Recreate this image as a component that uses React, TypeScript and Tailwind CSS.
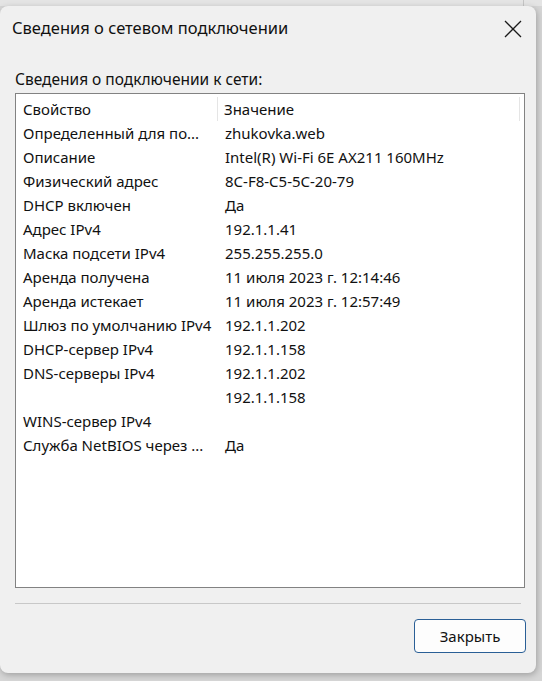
import React from "react";

const rows: [string, string][] = [
  ["Определенный для по...", "zhukovka.web"],
  ["Описание", "Intel(R) Wi-Fi 6E AX211 160MHz"],
  ["Физический адрес", "8C-F8-C5-5C-20-79"],
  ["DHCP включен", "Да"],
  ["Адрес IPv4", "192.1.1.41"],
  ["Маска подсети IPv4", "255.255.255.0"],
  ["Аренда получена", "11 июля 2023 г. 12:14:46"],
  ["Аренда истекает", "11 июля 2023 г. 12:57:49"],
  ["Шлюз по умолчанию IPv4", "192.1.1.202"],
  ["DHCP-сервер IPv4", "192.1.1.158"],
  ["DNS-серверы IPv4", "192.1.1.202"],
  ["", "192.1.1.158"],
  ["WINS-сервер IPv4", ""],
  ["Служба NetBIOS через ...", "Да"],
];

export default function App() {
  return (
    <div
      className="w-[542px] h-[681px] bg-[#d6d6d6] overflow-hidden flex flex-col"
      style={{ fontFamily: '"Noto Sans", "Segoe UI", sans-serif' }}
    >
      <div className="h-[6px] flex shrink-0 bg-[#e4e4e4]">
        <div className="w-[524px] border-r border-[#c4c4c4]" />
      </div>
      <div className="w-[536px] h-[667px] bg-[#f0f0f0] rounded-lg shadow-[1px_2px_6px_rgba(0,0,0,0.25)] flex flex-col text-[#111]">
        <div className="h-[44px] flex items-center justify-between pl-[12px] pr-[14px]">
          <span className="text-[16.5px] leading-none">Сведения о сетевом подключении</span>
          <svg width="18" height="18" viewBox="0 0 18 18" className="mt-[1px]">
            <path d="M1 1 L17 17 M17 1 L1 17" stroke="#1a1a1a" strokeWidth="1.3" fill="none" />
          </svg>
        </div>
        <div className="pl-[15px] pt-[19px] text-[15.5px] leading-[20px]">Сведения о подключении к сети:</div>
        <div className="ml-[15px] mt-[4px] w-[510px] h-[495px] bg-white border border-[#828282] pt-[3px] text-[15px]">
          <div className="flex h-[24px] items-center">
            <div className="w-[202px] pl-[7px] border-r border-[#e5e5e5] h-full flex items-center">Свойство</div>
            <div className="w-[302px] pl-[6px] border-r border-[#e5e5e5] h-full flex items-center">Значение</div>
          </div>
          {rows.map(([k, v], i) => (
            <div key={i} className="flex h-[24px] items-center">
              <div className="w-[202px] pl-[7px] whitespace-nowrap overflow-hidden">{k}</div>
              <div className="pl-[7px] whitespace-nowrap">{v}</div>
            </div>
          ))}
        </div>
        <div className="ml-[15px] mt-[15px] w-[506px] h-px bg-[#c8c8c8]" />
        <div className="flex justify-end pr-[10px] mt-[15px]">
          <button className="w-[112px] h-[34px] rounded-[4px] border border-[#2a5f96] bg-[#fdfdfd] text-[15px] text-[#111]">
            Закрыть
          </button>
        </div>
      </div>
    </div>
  );
}
